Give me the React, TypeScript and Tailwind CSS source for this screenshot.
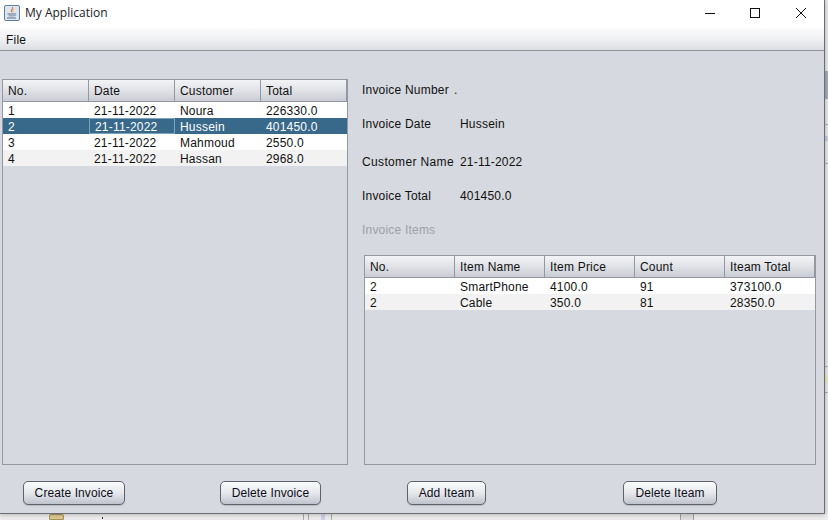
const invoices = [
  ['1', '21-11-2022', 'Noura', '226330.0'],
  ['2', '21-11-2022', 'Hussein', '401450.0'],
  ['3', '21-11-2022', 'Mahmoud', '2550.0'],
  ['4', '21-11-2022', 'Hassan', '2968.0'],
];

const items = [
  ['2', 'SmartPhone', '4100.0', '91', '373100.0'],
  ['2', 'Cable', '350.0', '81', '28350.0'],
];

const details = [
  { label: 'Invoice Number', value: '.', rowClass: 'mt-0', labelClass: 'w-[92px]' },
  { label: 'Invoice Date', value: 'Hussein', rowClass: 'mt-[10px]', labelClass: 'w-[98px]' },
  { label: 'Customer Name', value: '21-11-2022', rowClass: 'mt-[14px]', labelClass: 'w-[98px] tracking-[0.35px]' },
  { label: 'Invoice Total', value: '401450.0', rowClass: 'mt-[10px]', labelClass: 'w-[98px]' },
];

// bits of the desktop showing round the window
const desktopBits = [
  'left-[49px] top-[514px] h-[6px] w-[15px] rounded-t-[2px] border border-[#a8925a] bg-[#dcc88f]',
  'left-[102px] top-[517px] h-[2px] w-[1px] bg-[#333]',
  'left-[303px] top-[514px] h-[6px] w-[1px] bg-[#a9a9a9]',
  'left-[308px] top-[514px] h-[6px] w-[1px] bg-[#a9a9a9]',
  'left-[321px] top-[514px] h-[6px] w-[4px] bg-[#cfcfe8]',
  'left-[331px] top-[514px] h-[6px] w-[1px] bg-[#a9a9a9]',
  'left-[680px] top-[514px] h-[6px] w-[14px] border-x border-[#a0a0a0] bg-[#dedede]',
  'left-[825px] top-[71px] h-[28px] w-[3px] bg-[#a9b0ba]',
  'left-[825px] top-[124px] h-[1px] w-[3px] bg-[#b5b5b5]',
  'left-[825px] top-[136px] h-[5px] w-[3px] bg-[#cfcfe8]',
  'left-[825px] top-[163px] h-[1px] w-[3px] bg-[#b5b5b5]',
  'left-[825px] top-[366px] h-[1px] w-[3px] bg-[#b5b5b5]',
  'left-[825px] top-[375px] h-[8px] w-[3px] bg-[#efeec0]',
  'left-[825px] top-[392px] h-[1px] w-[3px] bg-[#b5b5b5]',
];

function JavaIcon() {
  return (
    <svg width="16" height="16" viewBox="0 0 16 16" className="shrink-0">
      <rect x="0.5" y="0.5" width="15" height="15" rx="1.5" fill="#dfe5ee" stroke="#5f7f9f" />
      <path d="M8.5 2C9.8 4 6.8 5 7.6 7.2 6 5.5 9 4 8.5 2Z" fill="#e2711d" stroke="#e2711d" strokeWidth="0.7" />
      <path d="M10 4.5C9 5.5 8.6 6.2 9 7.4" fill="none" stroke="#e8964e" strokeWidth="0.8" />
      <path d="M3.5 8.5H10.5V9.5H3.5ZM4.5 10.5H10V11.3H4.5ZM3 12.6H12V13.5H3Z" fill="#5b7693" />
      <path d="M10.5 8.6C12.5 8.2 12.5 10.4 10 10.8" fill="none" stroke="#5b7693" strokeWidth="0.8" />
    </svg>
  );
}

function WindowControls() {
  return (
    <div className="mb-[3px] flex items-center">
      <svg width="12" height="12" viewBox="0 0 12 12" className="mr-[33px]">
        <path d="M1 6.5H11" stroke="#111" strokeWidth="1" />
      </svg>
      <svg width="12" height="12" viewBox="0 0 12 12" className="mr-[34px]">
        <rect x="1.5" y="1.5" width="9" height="9" fill="none" stroke="#111" strokeWidth="1" />
      </svg>
      <svg width="12" height="12" viewBox="0 0 12 12">
        <path d="M1 1L11 11M11 1L1 11" stroke="#111" strokeWidth="1" />
      </svg>
    </div>
  );
}

function HeaderCell({ text, className }: { text: string; className: string }) {
  return (
    <div className={`flex h-full items-center border-r border-[#9297a1] bg-gradient-to-b from-[#f3f4f6] via-[#e0e2e7] to-[#c9ccd4] pl-[5px] ${className}`}>
      {text}
    </div>
  );
}

function LeftTable() {
  return (
    <div className="flex h-[386px] w-[346px] flex-col border border-[#9297a1]">
      <div className="flex h-[22px] shrink-0 border-b border-[#9297a1]">
        <HeaderCell text="No." className="w-[86px]" />
        <HeaderCell text="Date" className="w-[86px]" />
        <HeaderCell text="Customer" className="w-[86px]" />
        <HeaderCell text="Total" className="w-[86px]" />
      </div>
      {invoices.map((row, i) => (
        <div
          key={row[0]}
          className={`flex h-[16px] items-center ${i === 1 ? 'bg-[#39698a] text-white' : i % 2 === 0 ? 'bg-white' : 'bg-[#f2f2f2]'}`}
        >
          {row.map((cell, j) => (
            <div
              key={j}
              className={`flex h-full w-[86px] items-center pt-[1px] pl-[5px] ${i === 1 && j === 1 ? 'border border-[#7da2bd] pl-[4px]' : ''}`}
            >
              {cell}
            </div>
          ))}
        </div>
      ))}
    </div>
  );
}

function RightTable() {
  return (
    <div className="ml-[2px] flex h-[210px] w-[452px] flex-col border border-[#9297a1]">
      <div className="flex h-[22px] shrink-0 border-b border-[#9297a1]">
        <HeaderCell text="No." className="w-[90px]" />
        <HeaderCell text="Item Name" className="w-[90px]" />
        <HeaderCell text="Item Price" className="w-[90px]" />
        <HeaderCell text="Count" className="w-[90px]" />
        <HeaderCell text="Iteam Total" className="w-[90px]" />
      </div>
      {items.map((row, i) => (
        <div key={row[1]} className={`flex h-[16px] items-center ${i % 2 === 0 ? 'bg-white' : 'bg-[#f2f2f2]'}`}>
          {row.map((cell, j) => (
            <div key={j} className="w-[90px] pt-[1px] pl-[5px]">
              {cell}
            </div>
          ))}
        </div>
      ))}
    </div>
  );
}

function ActionButton({ text, className }: { text: string; className: string }) {
  return (
    <button
      type="button"
      className={`flex h-[24px] items-center justify-center rounded-[5px] border border-[#5f636b] bg-gradient-to-b from-[#fbfcfd] via-[#e6e8ec] to-[#bfc3cc] text-[12px] tracking-[0.1px] text-[#0d0d1a] shadow-[0_1px_1px_rgba(0,0,0,0.15)] ${className}`}
    >
      {text}
    </button>
  );
}

export default function App() {
  return (
    <div className="relative h-[520px] w-[828px] overflow-hidden bg-[#ececec] font-['Liberation_Sans',Arial,sans-serif] text-[12px] tracking-[0.2px] text-[#111]">
      {desktopBits.map((bit) => (
        <div key={bit} className={`absolute ${bit}`} />
      ))}
      <div className="relative flex h-[514px] w-[825px] flex-col border-r border-b border-[#6b6e74] bg-[#d6d9df] shadow-[0_0_5px_rgba(0,0,0,0.3)]">
        <div className="flex h-[28px] shrink-0 items-center justify-between bg-white pr-[17px] pl-[4px]">
          <div className="mb-[2px] flex items-center gap-[5px]">
            <JavaIcon />
            <span className="font-['Open_Sans',sans-serif] text-[12px] tracking-normal text-[#1a1a1a]">My Application</span>
          </div>
          <WindowControls />
        </div>
        <div className="flex h-[23px] shrink-0 items-center border-b border-[#9297a1] bg-gradient-to-b from-[#fbfbfc] via-[#f0f1f3] to-[#dcdee3] pt-[2px] pl-[6px]">
          File
        </div>
        <div className="flex pt-[28px] pl-[2px]">
          <LeftTable />
          <div className="ml-[14px] flex flex-col">
            <div className="-mt-[1px] flex flex-col">
              {details.map((d) => (
                <div key={d.label} className={`flex h-[24px] items-center ${d.rowClass}`}>
                  <span className={d.labelClass}>{d.label}</span>
                  <span>{d.value}</span>
                </div>
              ))}
              <div className="mt-[10px] flex h-[24px] items-center text-[#9ea1a8]">Invoice Items</div>
            </div>
            <div className="mt-[13px]">
              <RightTable />
            </div>
          </div>
        </div>
        <div className="mt-[16px] flex">
          <ActionButton text="Create Invoice" className="ml-[23px] w-[102px]" />
          <ActionButton text="Delete Invoice" className="ml-[95px] w-[101px]" />
          <ActionButton text="Add Iteam" className="ml-[86px] w-[79px]" />
          <ActionButton text="Delete Iteam" className="ml-[137px] w-[94px]" />
        </div>
      </div>
    </div>
  );
}
